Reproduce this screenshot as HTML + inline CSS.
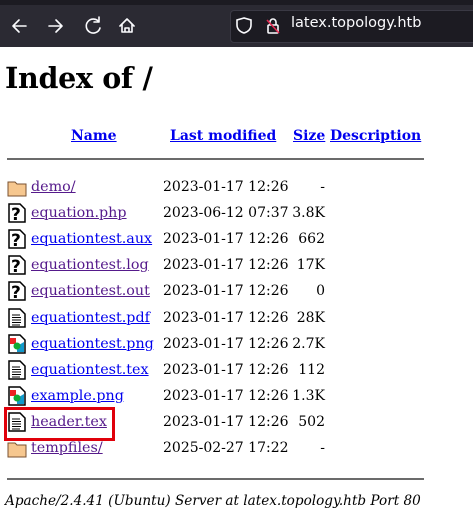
<!DOCTYPE html>
<html><head><meta charset="utf-8"><style>
body{margin:0;width:473px;height:527px;overflow:hidden;background:#fff;font-family:"DejaVu Serif",serif;position:relative}
.bar{position:absolute;left:0;top:0;width:473px;height:47px;background:#2b2a33}
.top{position:absolute;left:0;top:0;width:473px;height:5px;background:#1c1b22}
.url{position:absolute;left:230px;top:10px;width:260px;height:31px;background:#1c1b22;border-radius:4px;border:1px solid #3a3944}
.urltxt{position:absolute;left:291px;top:15px;color:#fbfbfe;font-family:"DejaVu Sans",sans-serif;font-size:14.5px}
h1{position:absolute;left:5px;top:61px;margin:0;font-size:28.5px;font-weight:bold;letter-spacing:-0.3px}
a{color:#551a8b;text-decoration:underline}
.t{position:absolute;font-size:14.3px;line-height:20px;white-space:nowrap}
.h{font-weight:bold;color:#0000ee;position:absolute;font-size:14px;top:128px}
.hr{position:absolute;left:7px;width:417px;height:2px;background:#6b6b6b}
.ic{position:absolute;left:7px;width:20px;height:20px}
.sz{position:absolute;right:148px;text-align:right;font-size:14px}
</style></head><body>
<div class="bar"></div><div class="top"></div>
<svg style="position:absolute;left:0;top:0" width="230" height="47" fill="none" stroke="#fbfbfe" stroke-width="1.6" stroke-linecap="round" stroke-linejoin="round">
<path d="M26 26H14M19 20l-6 6 6 6"/><path d="M49 26h12M56 20l6 6-6 6"/>
<path d="M99 22a7 7 0 1 0 1 6M99 17v5h-5"/>
<path d="M120 26l7-7 7 7M122 24v8h10v-8M125 32v-4h4v4"/>
</svg>
<div class="url"></div>
<svg style="position:absolute;left:230px;top:10px" width="60" height="31" fill="none" stroke="#fbfbfe" stroke-width="1.6">
<path d="M14 8l-7 2v5c0 4 3 7 7 8 4-1 7-4 7-8v-5z"/>
<rect x="38" y="15" width="10" height="8" rx="1"/><path d="M40 15v-3a3 3 0 0 1 6 0v3"/>
<path d="M37 10l12 13" stroke="#e22850"/>
</svg>
<div class="urltxt">latex.topology.htb</div>
<h1>Index of /</h1>
<a href="#" class="h" style="left:71px">Name</a>
<a href="#" class="h" style="left:170px">Last modified</a>
<a href="#" class="h" style="left:293px">Size</a>
<a href="#" class="h" style="left:330px">Description</a>
<div class="hr" style="top:158px"></div>
<div id="rows"></div>
<div style="position:absolute;left:5px;top:493px;font-style:italic;font-size:13.6px">Apache/2.4.41 (Ubuntu) Server at latex.topology.htb Port 80</div>
<div class="hr" style="top:478px"></div>
<div style="position:absolute;left:4px;top:407px;width:111px;height:34px;border:3px solid #e0000a;box-sizing:border-box"></div>
<script>
var R=[["demo/","2023-01-17 12:26","-","d"],["equation.php","2023-06-12 07:37","3.8K","q"],["equationtest.aux","2023-01-17 12:26","662","q",1],["equationtest.log","2023-01-17 12:26","17K","q"],["equationtest.out","2023-01-17 12:26","0","q"],["equationtest.pdf","2023-01-17 12:26","28K","t",1],["equationtest.png","2023-01-17 12:26","2.7K","i",1],["equationtest.tex","2023-01-17 12:26","112","t",1],["example.png","2023-01-17 12:26","1.3K","i",1],["header.tex","2023-01-17 12:26","502","t"],["tempfiles/","2025-02-27 17:22","-","d"]];
var icons={d:'<path d="M1 5h7l2 2h9v12H1z" fill="#f6c78f" stroke="#7a5230"/>',
q:'<path d="M2 1h11l5 5v13H2z" fill="#fff" stroke="#000" stroke-width="1.5"/><text x="4" y="17" font-size="17" font-weight="bold" font-family="DejaVu Sans">?</text>',
t:'<path d="M2 1h11l5 5v13H2z" fill="#fff" stroke="#000" stroke-width="1.5"/><path d="M5 7h8M5 9.5h9M5 12h9M5 14.5h9M5 17h8" stroke="#000"/>',
i:'<path d="M2 1h11l5 5v13H2z" fill="#fff" stroke="#000" stroke-width="1.5"/><path d="M3 4h6v6H3z" fill="#e22"/><path d="M10 12l7-4v10h-7z" fill="#19c"/><circle cx="10" cy="12" r="3.5" fill="#1a3"/>'};
var h='';R.forEach(function(r,i){var y=177+i*26.1;
h+='<svg class="ic" style="top:'+(y)+'px" viewBox="0 0 20 20">'+icons[r[3]]+'</svg>';
h+='<a href="#" class="t" style="left:31px;top:'+y+'px;'+(r[4]?'color:#0000ee':'')+'">'+r[0]+'</a>';
h+='<div class="t" style="left:163px;top:'+y+'px;font-size:14px">'+r[1]+'</div>';
h+='<div class="t sz" style="top:'+y+'px">'+r[2]+'</div>';});
document.getElementById('rows').innerHTML=h;
</script>
</body></html>
